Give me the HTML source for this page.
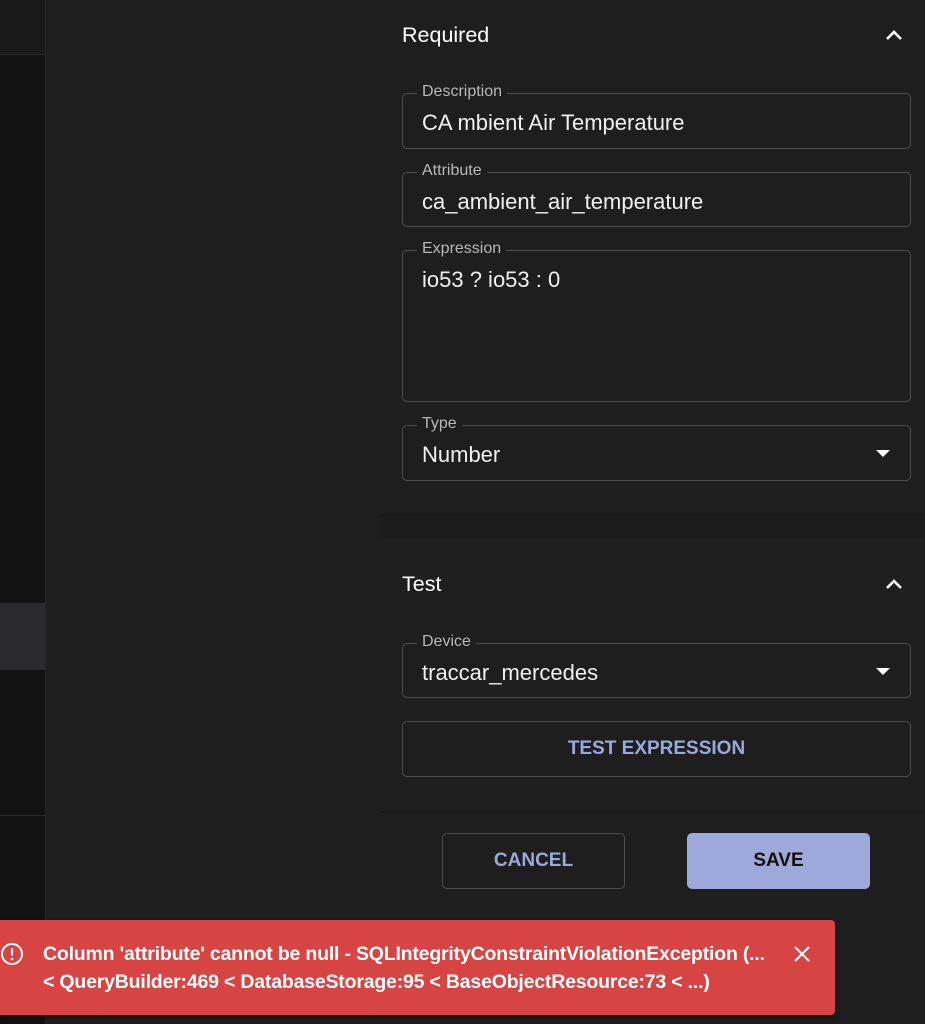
<!DOCTYPE html>
<html><head><meta charset="utf-8"><style>
*{box-sizing:border-box;margin:0;padding:0}
body{width:925px;height:1024px;background:#1e1e1e;font-family:"Liberation Sans",sans-serif;color:#fff;position:relative;overflow:hidden}
.a{position:absolute}
.f{position:absolute;left:402px;width:509px;border:1px solid #4e4e4e;border-radius:5px}
.lb{position:absolute;left:14px;top:-11px;background:#1e1e1e;padding:0 5px;font-size:16px;color:#b8b8b8;line-height:18px}
.v{position:absolute;left:19px;font-size:22px;color:#f0f0f0}
.car{position:absolute;right:20px;width:0;height:0;border-left:7px solid transparent;border-right:7px solid transparent;border-top:7px solid #fff}
.h{position:absolute;left:402px;font-size:21.5px}
.chev{position:absolute;left:885px;width:18px;height:12px}
.btn{position:absolute;border-radius:5px;font-size:18px;font-weight:bold;display:flex;align-items:center;justify-content:center}
</style></head><body>
<div class="a" style="left:0;top:0;width:45px;height:1024px;background:#121212"></div>
<div class="a" style="left:0;top:0;width:45px;height:55px;background:#1a1a1a;border-bottom:1px solid #2a2a2a"></div>
<div class="a" style="left:0;top:603px;width:45px;height:67px;background:#2a2a2e"></div>
<div class="a" style="left:0;top:815px;width:45px;height:1px;background:#2a2a2a"></div>
<div class="a" style="left:45px;top:0;width:1px;height:1024px;background:#262626"></div>
<div class="a" style="left:380px;top:514px;width:545px;height:24px;background:#1c1c1c;border-top:1px solid #181818"></div>
<div class="a" style="left:380px;top:811px;width:545px;height:2px;background:#191919"></div>

<div class="h" style="top:23px">Required</div>
<svg class="chev" style="top:29px" viewBox="0 0 18 12"><path d="M2 10 L9 3 L16 10" stroke="#fff" stroke-width="2.6" fill="none"/></svg>

<div class="f" style="top:93px;height:56px"><span class="lb">Description</span><span class="v" style="top:16px">CA mbient Air Temperature</span></div>
<div class="f" style="top:172px;height:55px"><span class="lb">Attribute</span><span class="v" style="top:16px">ca_ambient_air_temperature</span></div>
<div class="f" style="top:250px;height:152px"><span class="lb">Expression</span><span class="v" style="top:16px">io53 ? io53 : 0</span></div>
<div class="f" style="top:425px;height:56px"><span class="lb">Type</span><span class="v" style="top:16px">Number</span><span class="car" style="top:24px"></span></div>

<div class="h" style="top:572px">Test</div>
<svg class="chev" style="top:578px" viewBox="0 0 18 12"><path d="M2 10 L9 3 L16 10" stroke="#fff" stroke-width="2.6" fill="none"/></svg>
<div class="f" style="top:643px;height:55px"><span class="lb">Device</span><span class="v" style="top:16px">traccar_mercedes</span><span class="car" style="top:24px"></span></div>
<div class="btn" style="left:402px;top:721px;width:509px;height:56px;border:1px solid #4e4e4e;color:#9ba8dc;font-size:19px">TEST EXPRESSION</div>

<div class="btn" style="left:442px;top:833px;width:183px;height:56px;border:1px solid #4e4e4e;color:#9ba8dc;font-size:19px">CANCEL</div>
<div class="btn" style="left:687px;top:833px;width:183px;height:56px;background:#9fa8da;color:#111;font-size:19px">SAVE</div>

<div class="a" style="left:0;top:920px;width:835px;height:95px;background:#d64444;border-radius:0 4px 4px 0;box-shadow:0 3px 6px rgba(0,0,0,.4)"></div>
<svg class="a" style="left:0;top:942px" width="24" height="24" viewBox="0 0 24 24"><circle cx="12" cy="12" r="10" stroke="#fff" stroke-width="2" fill="none"/><path d="M12 6.5v7" stroke="#fff" stroke-width="2.2"/><circle cx="12" cy="17" r="1.3" fill="#fff"/></svg>
<div class="a" style="left:43px;top:940px;font-size:19.5px;font-weight:bold;line-height:28px;color:#fff;letter-spacing:-0.2px">Column 'attribute' cannot be null - SQLIntegrityConstraintViolationException (...<br>&lt; QueryBuilder:469 &lt; DatabaseStorage:95 &lt; BaseObjectResource:73 &lt; ...)</div>
<svg class="a" style="left:794px;top:946px" width="16" height="16" viewBox="0 0 16 16"><path d="M1 1L15 15M15 1L1 15" stroke="#fff" stroke-width="2"/></svg>
</body></html>
